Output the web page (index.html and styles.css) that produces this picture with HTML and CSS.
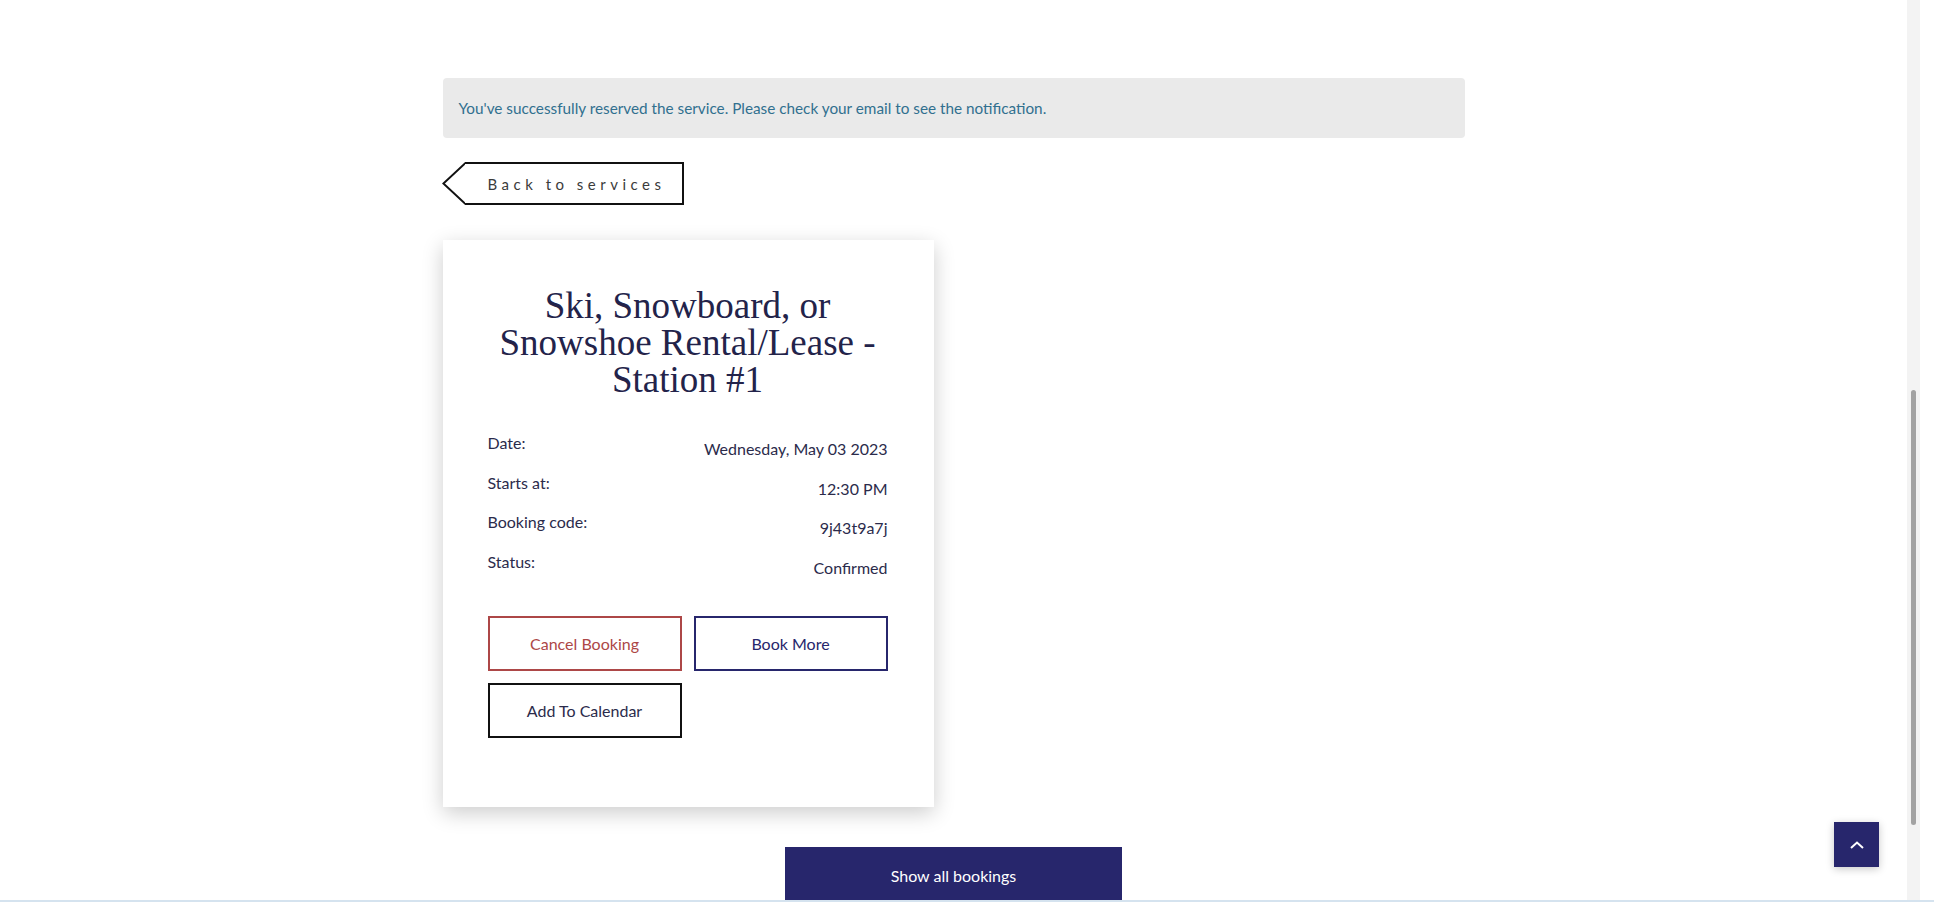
FILE: index.html
```html
<!DOCTYPE html>
<html lang="en">
<head>
<meta charset="utf-8">
<title>Booking confirmed</title>
<link rel="stylesheet" href="styles.css">
</head>
<body>
<div class="page">
  <main class="container">
    <div class="alert">You've successfully reserved the service. Please check your email to see the notification.</div>

    <a class="back-btn" href="#">
      <svg class="back-arrow" width="23" height="43" viewBox="0 0 23 43" aria-hidden="true">
        <polyline points="23.5,1 1.4,21.5 23.5,42" fill="none" stroke="#111" stroke-width="2"/>
      </svg>
      <span class="back-label">Back to services</span>
    </a>

    <section class="card">
      <h2 class="card-title">Ski, Snowboard, or Snowshoe Rental/Lease - Station #1</h2>
      <div class="details">
        <div class="row"><span class="label">Date:</span><span class="value">Wednesday, May 03 2023</span></div>
        <div class="row"><span class="label">Starts at:</span><span class="value">12:30 PM</span></div>
        <div class="row"><span class="label">Booking code:</span><span class="value">9j43t9a7j</span></div>
        <div class="row"><span class="label">Status:</span><span class="value">Confirmed</span></div>
      </div>
      <div class="actions">
        <button class="btn btn-cancel">Cancel Booking</button>
        <button class="btn btn-more">Book More</button>
        <button class="btn btn-cal">Add To Calendar</button>
      </div>
    </section>

    <div class="all-wrap">
      <button class="btn-all">Show all bookings</button>
    </div>
  </main>
</div>

<button class="to-top" aria-label="Back to top">
  <svg width="14" height="8" viewBox="0 0 14 8" aria-hidden="true">
    <polyline points="1,7 7,1.5 13,7" fill="none" stroke="#fff" stroke-width="2"/>
  </svg>
</button>

<div class="scrollbar"><div class="track"><div class="thumb"></div></div></div>
<div class="bottom-line"></div>
</body>
</html>
```

FILE: styles.css
```css
html, body {
  margin: 0;
  padding: 0;
  overflow: hidden;
  background: #fff;
}

body {
  font-family: Lato, "Open Sans", "Liberation Sans", sans-serif;
  color: #2b2b4b;
}

.page {
  width: 1907px;
  height: 902px;
}

.container {
  width: 1022px;
  margin: 0 auto;
  padding-top: 78px;
}

.alert {
  background: #eaeaea;
  border-radius: 4px;
  height: 60px;
  box-sizing: border-box;
  padding: 20px 16px;
  line-height: 20px;
  font-size: 15.3px;
  color: #31708f;
}

.back-btn {
  display: flex;
  width: fit-content;
  margin-top: 24px;
  height: 43px;
  text-decoration: none;
  margin-left: -1px;
}

.back-arrow {
  display: block;
  flex: none;
}

.back-label {
  display: flex;
  align-items: center;
  height: 43px;
  box-sizing: border-box;
  border: 2px solid #111;
  border-left: none;
  padding: 0 16px 0 23px;
  font-size: 15px;
  letter-spacing: 4.5px;
  color: #3b3b3b;
}

.card {
  margin-top: 35px;
  width: 491px;
  box-sizing: border-box;
  padding: 47px 46px 69px 45px;
  background: #fff;
  box-shadow: 0 6px 20px rgba(0, 0, 0, 0.2);
}

.card-title {
  margin: 0;
  font-family: "Liberation Serif", "Times New Roman", serif;
  font-weight: 400;
  font-size: 37px;
  line-height: 37px;
  text-align: center;
  color: #23234a;
}

.details {
  margin-top: 33px;
  display: flex;
  flex-direction: column;
  gap: 9.5px;
}

.row {
  display: flex;
  justify-content: space-between;
  font-size: 16px;
  line-height: 24px;
}

.value {
  padding-top: 6px;
  text-align: right;
}

.actions {
  margin-top: 36.5px;
  display: grid;
  grid-template-columns: 194px 194px;
  gap: 12px;
}

.btn {
  height: 55px;
  background: #fff;
  border: 2px solid #111;
  font-family: Lato, "Open Sans", "Liberation Sans", sans-serif;
  font-size: 16px;
  color: #2b2b4b;
  padding: 0;
  cursor: pointer;
}

.btn-cancel {
  border-color: #ad4747;
  color: #ad4747;
}

.btn-more {
  border-color: #27266c;
  color: #27266c;
}

.btn-cal {
  border-color: #111;
}

.all-wrap {
  display: flex;
  justify-content: center;
  margin-top: 40px;
}

.btn-all {
  width: 337px;
  height: 56px;
  background: #27266c;
  border: none;
  color: #fff;
  font-family: Lato, "Open Sans", "Liberation Sans", sans-serif;
  font-size: 16px;
  padding: 0;
}

.to-top {
  position: fixed;
  right: 55px;
  bottom: 35px;
  width: 45px;
  height: 45px;
  padding: 0;
  border: none;
  background: #27266c;
  box-shadow: 0 2px 8px rgba(0, 0, 0, 0.22);
  display: flex;
  align-items: center;
  justify-content: center;
}

.to-top svg {
  display: block;
}

.scrollbar {
  position: fixed;
  top: 0;
  right: 0;
  width: 27px;
  height: 100%;
  background: #fff;
}

.track {
  width: 13px;
  height: 100%;
  background: #f3f3f3;
  position: relative;
}

.thumb {
  position: absolute;
  left: 4px;
  top: 390px;
  width: 5px;
  height: 435px;
  border-radius: 3px;
  background: #a3a3a3;
}

.bottom-line {
  position: fixed;
  left: 0;
  right: 0;
  bottom: 0;
  height: 2px;
  background: #d5e3ef;
}
```
